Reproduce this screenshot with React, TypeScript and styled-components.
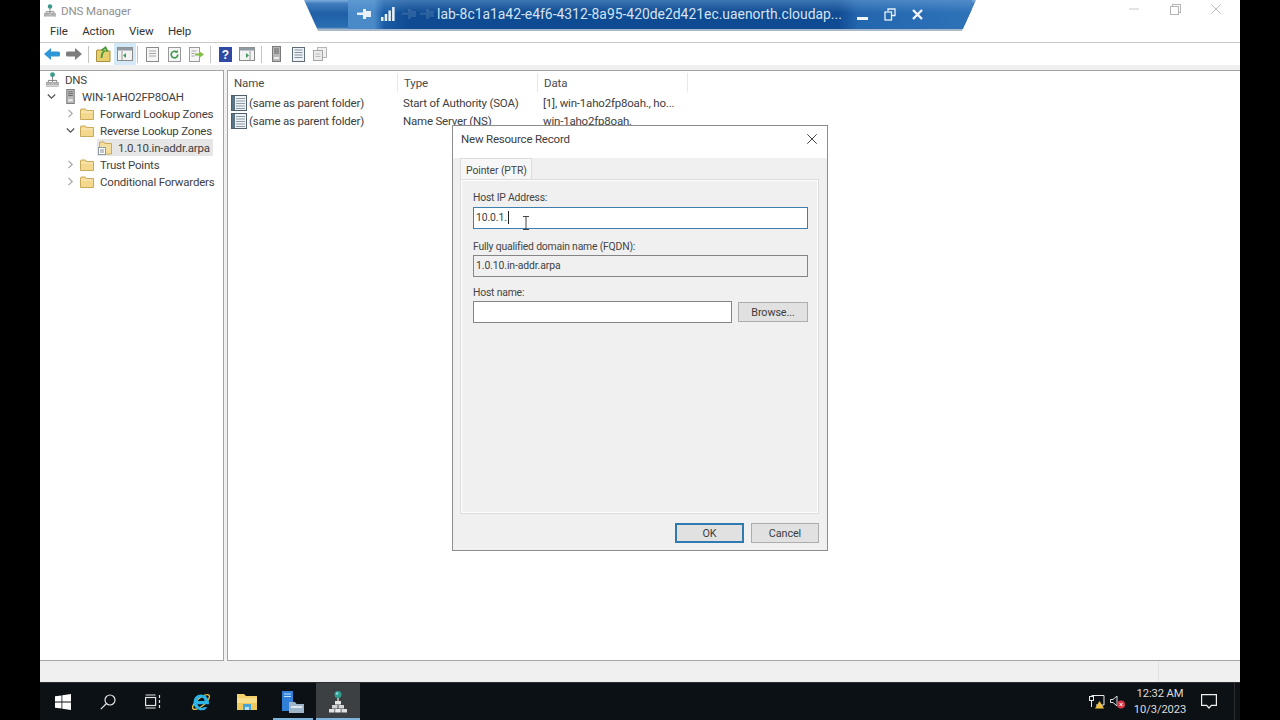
import React from "react";
import styled, { createGlobalStyle } from "styled-components";

const Global = createGlobalStyle`
  html, body { margin: 0; padding: 0; background: #000; overflow: hidden; }
  #root { width: 1280px; height: 720px; }
  * { box-sizing: border-box; }
`;

const FONT = `Roboto, "Noto Sans", "Liberation Sans", sans-serif`;

const Page = styled.div`
  width: 1280px; height: 720px; padding: 0 40px; background: #000;
  font-family: ${FONT}; font-size: 11px; color: #3c3c3c;
`;
const Screen = styled.div`
  position: relative; width: 1200px; height: 720px;
  display: flex; flex-direction: column; background: #fff; overflow: hidden;
`;
const TitleBar = styled.div`
  height: 22px; display: flex; align-items: center; padding: 0 0 1px 4px; background: #fff;
`;
const TitleText = styled.span`
  margin-left: 5px; color: #8f8f8f; font-size: 11.5px; letter-spacing: -0.1px;
`;
const WindowControls = styled.div`
  margin-left: auto; display: flex; align-items: center; gap: 30px; padding-right: 19px; margin-top: -3px;
`;
const MenuBar = styled.div`
  height: 21px; display: flex; align-items: center; gap: 14.5px; padding: 0 0 2px 10px;
  border-bottom: 1px solid #c9c9c9;
`;
const MenuItem = styled.span`
  font-size: 11.5px; letter-spacing: -0.1px; color: #333;
`;
const Toolbar = styled.div`
  height: 22px; display: flex; align-items: center; padding-left: 1px; background: #fff;
`;
const ToolButton = styled.div<{ $active?: boolean }>`
  width: 22px; height: 22px; display: flex; align-items: center; justify-content: center;
  background: ${(p) => (p.$active ? "#d3e9f8" : "transparent")};
`;
const ToolSep = styled.div<{ $tight?: boolean }>`
  width: 1px; height: 17px; background: #c4c4c4; margin: 0 3px 0 ${(p) => (p.$tight ? 1 : 3)}px;
`;
const ToolStrip = styled.div`
  height: 5px; background: #f0f0f0;
`;
const Panes = styled.div`
  flex: 1; display: flex; gap: 3px; background: #f0f0f0; min-height: 0;
`;
const TreePane = styled.div`
  width: 184px; background: #fff; border: 1px solid #a5a5a5; border-left: none;
`;
const TreeRow = styled.div<{ $indent: number }>`
  height: 17px; display: flex; align-items: center; padding-left: ${(p) => p.$indent}px;
  font-size: 11.5px; letter-spacing: -0.2px; color: #3f3f3f; white-space: nowrap;
`;
const Twist = styled.span`
  width: 12px; height: 12px; display: flex; align-items: center; justify-content: center; flex: none;
`;
const TreeIcon = styled.span<{ $offset?: number }>`
  width: 14px; height: 15px; margin-left: ${(p) => p.$offset ?? 0}px;
  display: flex; align-items: center; justify-content: center; flex: none;
`;
const TreeLabel = styled.span<{ $gap: number }>`
  margin-left: ${(p) => p.$gap}px;
`;
const ZoneSelection = styled.div`
  display: flex; align-items: center; height: 17px; width: 116px; padding-left: 1px; background: #e6e6e6;
`;
const ListPane = styled.div`
  flex: 1; background: #fff; border: 1px solid #a5a5a5; border-right: none;
`;
const HeaderRow = styled.div`
  height: 23px; display: flex; padding-top: 2px;
`;
const HeaderCell = styled.div<{ $w: number }>`
  width: ${(p) => p.$w}px; height: 19px; padding-left: 6px; display: flex; align-items: center;
  border-right: 1px solid #e8e8e8; font-size: 11.5px; letter-spacing: -0.1px; color: #4a4a4a;
`;
const ListRow = styled.div`
  height: 18px; display: flex; align-items: center; white-space: nowrap;
  font-size: 11.5px; letter-spacing: -0.2px; color: #404040;
`;
const NameCell = styled.div`
  width: 170px; padding-left: 3px; display: flex; align-items: center; gap: 2px;
`;
const Cell = styled.div<{ $w?: number }>`
  width: ${(p) => (p.$w ? `${p.$w}px` : "auto")}; padding-left: 5px;
`;
const StatusBar = styled.div`
  height: 21px; background: #f0f0f0; display: flex; justify-content: flex-end;
`;
const StatusGrip = styled.div`
  width: 82px; border-left: 1px solid #e2e2e2;
`;
const Taskbar = styled.div`
  height: 38px; background: #0c1116; display: flex; align-items: center; border-top: 1px solid #2a2e33;
`;
const TaskButton = styled.div<{ $active?: boolean; $running?: boolean; $w?: number; $offset?: number }>`
  position: relative; width: ${(p) => p.$w ?? 46}px; height: 37px; margin-left: ${(p) => p.$offset ?? 0}px;
  display: flex; align-items: center; justify-content: center;
  background: ${(p) => (p.$active ? "#3d4043" : "transparent")};
  &::after {
    content: ""; position: absolute; left: ${(p) => (p.$active ? 0 : 3)}px; right: ${(p) => (p.$active ? 0 : 3)}px; bottom: 0; height: 2px;
    background: ${(p) => (p.$running ? "#7fb5dc" : "transparent")};
  }
`;
const Tray = styled.div`
  margin-left: auto; display: flex; align-items: center; height: 100%; color: #e6e6e6;
`;
const TrayIcon = styled.div`
  width: 21px; display: flex; justify-content: center;
`;
const Clock = styled.div`
  width: 62px; margin-left: 1px; text-align: center; line-height: 16px; font-size: 11.2px; letter-spacing: -0.1px; color: #dcdcdc;
`;
const Notify = styled.div`
  width: 44px; display: flex; justify-content: center; padding-right: 8px; margin-right: 5px;
  border-right: 1px solid #2c2c2c; height: 100%; align-items: center;
`;

/* Remote desktop connection bar */
const ConnBar = styled.div`
  position: absolute; left: 264px; top: 0; width: 672px; height: 31px;
  clip-path: polygon(0 0, 100% 0, 97.9% 100%, 2.1% 100%);
  background: linear-gradient(180deg, #7eaddb 0, #3e7cbc 12%, #1f5fa6 45%, #2a6fb4 88%, #a9b9c9 95%);
  display: flex; align-items: flex-start; color: #e4edf7;
`;
const ConnInner = styled.div`
  height: 29px; width: 624px; margin-left: 44px; padding: 0 0 1px 4px;
  background:
    linear-gradient(180deg, rgba(120, 170, 220, 0.45) 0, rgba(120, 170, 220, 0) 45%),
    linear-gradient(90deg, #4a8ac8 0, #4a8ac8 26px, #1a5da6 36px, #0f4b92 60px, #0f4b92 490px, #2366ae 510px, #2e72b8 100%);
  display: flex; align-items: center;
`;
const PinBox = styled.div`
  width: 24px; display: flex; justify-content: center;
`;
const GhostBox = styled.div`
  width: 18px; display: flex; justify-content: center; opacity: 0.13;
`;
const ConnText = styled.span`
  width: 406px; margin-left: 1px; font-size: 13.9px; color: #d5e3f2; white-space: nowrap;
`;
const ConnControls = styled.div`
  display: flex; align-items: center; gap: 16px; margin-left: 14px;
`;

/* Dialog */
const Dialog = styled.div`
  position: absolute; left: 412px; top: 125px; width: 376px; height: 426px;
  background: #f0f0f0; border: 1px solid #8d8d8d; display: flex; flex-direction: column;
`;
const DialogTitle = styled.div`
  height: 27px; background: #fff; display: flex; align-items: center; justify-content: space-between;
  padding: 0 10px 2px 8px; font-size: 11.5px; letter-spacing: -0.2px; color: #404040; flex: none;
`;
const TabStrip = styled.div`
  height: 27px; background: linear-gradient(#fff 0, #fff 5px, #f0f0f0 5px); padding: 5px 0 0 7px; display: flex; flex: none;
`;
const Tab = styled.div`
  width: 72px; height: 23px; background: #f7f7f7; border: 1px solid #dcdcdc; border-bottom: none;
  display: flex; align-items: center; padding-left: 5px; font-size: 10.4px; letter-spacing: -0.1px; color: #444;
`;
const TabPanel = styled.div`
  height: 335px; margin: -1px 8px 0 7px; background: #f0f0f0; border: 1px solid #dcdcdc;
  box-shadow: inset 0 0 0 1px #fff; padding: 10px 12px 0 12px;
`;
const FieldLabel = styled.div<{ $before?: number; $after?: number }>`
  height: 14px; line-height: 14px; padding-top: 1px; font-size: 10.4px; letter-spacing: -0.2px; color: #454545;
  margin-top: ${(p) => p.$before ?? 0}px; margin-bottom: ${(p) => p.$after ?? 2}px;
`;
const Field = styled.div<{ $focus?: boolean; $off?: boolean }>`
  height: 22px; width: 335px; border: 1px solid ${(p) => (p.$focus ? "#3f7fae" : "#858585")};
  background: ${(p) => (p.$off ? "#f0f0f0" : "#fff")};
  display: flex; align-items: center; padding: 0 0 2px 2px; font-size: 10.4px; letter-spacing: -0.1px; color: #404040;
  margin-bottom: 10px;
`;
const Caret = styled.span`
  display: inline-block; width: 1px; height: 13px; background: #222; margin-left: 1px;
`;
const HostRow = styled.div`
  display: flex; align-items: center; width: 335px; justify-content: space-between;
`;
const HostInput = styled.div`
  width: 259px; height: 22px; background: #fff; border: 1px solid #858585;
`;
const Button = styled.div<{ $primary?: boolean; $w: number }>`
  width: ${(p) => p.$w}px; height: 20px; display: flex; align-items: center; justify-content: center;
  background: #e1e1e1; border: ${(p) => (p.$primary ? "2px solid #2f7bb0" : "1px solid #adadad")};
  font-size: 10.8px; letter-spacing: -0.1px; color: #3c3c3c;
`;
const DialogFooter = styled.div`
  display: flex; justify-content: flex-end; gap: 7px; padding: 9px 8px 0 0;
`;
const IBeam = styled.svg`
  position: absolute; left: 482px; top: 216px;
`;

/* ---------- icons ---------- */
const DnsIcon = ({ s = 14 }: { s?: number }) => (
  <svg width={s} height={s * 1.15} viewBox="0 0 14 16">
    <circle cx="7" cy="2.800" r="2.600" fill="#3a9a8c" />
    <path d="M7 5v3M2.500 11V9h9v2M7 8v3" stroke="#777" fill="none" />
    <rect x="0.5" y="11" width="4" height="2.200" fill="#b5b5b5" stroke="#888" strokeWidth=".5" />
    <rect x="5" y="11" width="4" height="2.200" fill="#c5c5c5" stroke="#888" strokeWidth=".5" />
    <rect x="9.500" y="11" width="4" height="2.200" fill="#b5b5b5" stroke="#888" strokeWidth=".5" />
    <rect x="0.5" y="13.400" width="13" height="2.200" fill="#d5d5d5" stroke="#999" strokeWidth=".5" />
  </svg>
);
const TaskDns = () => (
  <svg width="18" height="22" viewBox="0 0 18 22">
    <circle cx="9" cy="3.500" r="3.500" fill="#2f9f8f" />
    <circle cx="8" cy="2.500" r="1.200" fill="#8fd6e8" />
    <path d="M9 7v3" stroke="#cfcfcf" strokeWidth="1.500" />
    <rect x="6" y="10" width="6" height="3.500" fill="#e6e6e6" />
    <rect x="3" y="14" width="5.500" height="3.500" fill="#d5d5d5" />
    <rect x="9.500" y="14" width="5.500" height="3.500" fill="#d5d5d5" />
    <rect x="0" y="18" width="5.500" height="3.500" fill="#e0e0e0" />
    <rect x="6.200" y="18" width="5.500" height="3.500" fill="#ececec" />
    <rect x="12.500" y="18" width="5.500" height="3.500" fill="#e0e0e0" />
  </svg>
);
const ServerIcon = ({ h = 15 }: { h?: number }) => (
  <svg width="9" height={h} viewBox="0 0 9 16">
    <rect x="0.5" y="0.5" width="8" height="15" fill="#b9b9b9" stroke="#7a7a7a" />
    <path d="M2 3h5M2 5h5M2 7h5" stroke="#666" />
    <rect x="2" y="11" width="5" height="2" fill="#eee" />
  </svg>
);
const Folder = () => (
  <svg width="14" height="13" viewBox="0 0 14 13">
    <path d="M.5 2.500v10h13v-9H6.500l-1-1.500H1z" fill="#f3d88e" stroke="#c9a95a" />
    <path d="M1 5h12" stroke="#fbeec4" />
  </svg>
);
const ZoneIcon = () => (
  <svg width="14" height="15" viewBox="0 0 14 15">
    <path d="M1.500 3v11h12V3.500H7L6 2H2z" fill="#f3dea0" stroke="#c9a95a" />
    <rect x=".5" y="7.500" width="7" height="7" fill="#fff" stroke="#8c9aa5" />
    <path d="M2 10h4M2 12h4" stroke="#7f8c96" />
  </svg>
);
const ChevronRight = () => (
  <svg width="7" height="9" viewBox="0 0 7 9"><path d="M1.500 .8l3.700 3.700-3.700 3.700" stroke="#a6a6a6" strokeWidth="1.200" fill="none" /></svg>
);
const ChevronDown = () => (
  <svg width="9" height="7" viewBox="0 0 9 7"><path d="M.8 1.500l3.700 3.700 3.700-3.700" stroke="#555" strokeWidth="1.300" fill="none" /></svg>
);
const RecordIcon = () => (
  <svg width="16" height="16" viewBox="0 0 16 16">
    <rect x=".5" y=".5" width="15" height="15" fill="#eef2f5" stroke="#4c5f6b" />
    <rect x="1" y="1" width="3" height="14" fill="#5b7585" />
    <path d="M5 3.500h9M5 6h9M5 8.500h9M5 11h9M5 13.500h9" stroke="#8d9ca6" />
  </svg>
);
const BackArrow = () => (
  <svg width="16" height="14" viewBox="0 0 16 14"><path d="M0 7l7-6v3.500h7.500q1.500 0 1.500 1.500v2q0 1.500-1.500 1.500H7V13z" fill="#2f97d6" /></svg>
);
const ForwardArrow = () => (
  <svg width="16" height="14" viewBox="0 0 16 14"><path d="M16 7L9 1v3.500H1.500Q0 4.500 0 6v2q0 1.500 1.500 1.500H9V13z" fill="#7d7d7d" /></svg>
);
const UpIcon = () => (
  <svg width="15" height="16" viewBox="0 0 15 16">
    <path d="M.5 5v10.500h13.500V5H7L6 4H1z" fill="#e8cf6e" stroke="#a8913c" />
    <path d="M5.500 12c0-4 1-6 3.500-7.500M5.500 4.500L9.500 1.500l2 4" stroke="#4f9a3a" strokeWidth="2" fill="none" />
  </svg>
);
const PaneIcon = ({ flip }: { flip?: boolean }) => (
  <svg width="16" height="14" viewBox="0 0 16 14">
    <rect x=".5" y=".5" width="15" height="13" fill="#f3f3f3" stroke="#8b8b8b" />
    <rect x=".5" y=".5" width="15" height="3" fill="#8f9aa3" />
    <path d={flip ? "M7 6l3 2.500L7 11z" : "M9 6L6 8.500 9 11z"} fill="#3e9a5d" />
    <path d={flip ? "M11 4v9" : "M5 4v9"} stroke="#9a9a9a" />
  </svg>
);
const DocIcon = () => (
  <svg width="13" height="15" viewBox="0 0 13 15">
    <rect x=".5" y=".5" width="12" height="14" fill="#f5f5f5" stroke="#8a8a8a" />
    <path d="M3 4h7M3 6.500h7M3 9h7" stroke="#a5a5a5" />
  </svg>
);
const RefreshIcon = () => (
  <svg width="13" height="15" viewBox="0 0 13 15">
    <rect x=".5" y=".5" width="12" height="14" fill="#f5f5f5" stroke="#9a9a9a" />
    <path d="M9.800 7.500a3.300 3.300 0 1 1-1-2.300" stroke="#3f9a4f" strokeWidth="1.600" fill="none" />
    <path d="M9.800 2.800v3h-3z" fill="#3f9a4f" />
  </svg>
);
const ExportIcon = () => (
  <svg width="15" height="15" viewBox="0 0 15 15">
    <rect x=".5" y=".5" width="10" height="14" fill="#f5f5f5" stroke="#9a9a9a" />
    <path d="M2.500 4h5M2.500 6.500h3M2.500 9h3" stroke="#a5a5a5" />
    <path d="M6 6.500h4V4l5 3.500L10 11V8.500H6z" fill="#7fbf3f" />
  </svg>
);
const HelpIcon = () => (
  <svg width="13" height="15" viewBox="0 0 13 15">
    <rect width="13" height="15" fill="#2f4aa5" />
    <text x="6.500" y="12" textAnchor="middle" fontSize="12" fontWeight="700" fill="#fff" fontFamily="Liberation Sans">?</text>
  </svg>
);
const ListDocIcon = () => (
  <svg width="13" height="15" viewBox="0 0 13 15">
    <rect x=".5" y=".5" width="12" height="14" fill="#eef2f4" stroke="#5d6d78" />
    <path d="M2.500 3h8M2.500 5.500h8M2.500 8h8M2.500 10.500h8" stroke="#84939d" />
  </svg>
);
const CopyDocIcon = () => (
  <svg width="14" height="14" viewBox="0 0 14 14">
    <rect x="4.500" y=".5" width="9" height="10" fill="#f0f0f0" stroke="#b5b5b5" />
    <rect x=".5" y="3.500" width="9" height="10" fill="#ececec" stroke="#a5a5a5" />
    <path d="M2.500 7h5M2.500 9.500h5" stroke="#bbb" />
  </svg>
);
const Minimize = () => (
  <svg width="11" height="3" viewBox="0 0 11 3"><path d="M0 1h10" stroke="#c8c8c8" /></svg>
);
const Restore = () => (
  <svg width="11" height="11" viewBox="0 0 11 11" fill="#fff" stroke="#b5b5b5">
    <rect x="2.500" y=".5" width="8" height="8" /><rect x=".5" y="2.500" width="8" height="8" />
  </svg>
);
const CloseX = ({ c = "#bdbdbd", s = 10 }: { c?: string; s?: number }) => (
  <svg width={s} height={s} viewBox="0 0 10 10"><path d="M.3.300l9.400 9.400M9.700.300L.3 9.700" stroke={c} strokeWidth={10 / s} /></svg>
);
const Pin = () => (
  <svg width="14" height="12" viewBox="0 0 14 12" fill="#e8f0f8">
    <rect x="0" y="4.500" width="7" height="2.500" /><rect x="6" y="1" width="3" height="10" /><rect x="9" y="3" width="5" height="6" />
  </svg>
);
const Signal = () => (
  <svg width="14" height="14" viewBox="0 0 14 14" fill="#e8f0f8">
    <rect x="0" y="10" width="2.500" height="4" /><rect x="3.700" y="7" width="2.500" height="7" /><rect x="7.400" y="3.500" width="2.500" height="10.500" /><rect x="11.100" y="0" width="2.500" height="14" />
  </svg>
);
const ConnMin = () => (
  <svg width="11" height="12" viewBox="0 0 11 12"><rect x="0" y="9" width="11" height="3" fill="#f0f5fa" /></svg>
);
const ConnRestore = () => (
  <svg width="12" height="13" viewBox="0 0 12 13" fill="none" stroke="#e8f0f8" strokeWidth="1.300">
    <path d="M4 3V1h7v6.500H8" /><rect x="1" y="4" width="6.500" height="8" />
  </svg>
);
const ConnClose = () => (
  <svg width="11" height="11" viewBox="0 0 11 11"><path d="M1 1l9 9M10 1l-9 9" stroke="#f3f7fb" strokeWidth="2.400" /></svg>
);
const WinLogo = () => (
  <svg width="16" height="16" viewBox="0 0 16 16" fill="#fff">
    <path d="M0 2.300l6.500-.9v6.200H0zM7.300 1.300L16 0v7.600H7.300zM0 8.400h6.500v6.200L0 13.700zM7.300 8.400H16V16l-8.700-1.200z" />
  </svg>
);
const SearchIcon = () => (
  <svg width="16" height="16" viewBox="0 0 16 16" fill="none" stroke="#e4e4e4" strokeWidth="1.200">
    <circle cx="10" cy="6" r="5" /><path d="M6.500 9.500L.8 15.200" />
  </svg>
);
const TaskView = () => (
  <svg width="16" height="15" viewBox="0 0 16 15" fill="none" stroke="#e4e4e4" strokeWidth="1.200">
    <rect x=".6" y="3.500" width="10" height="8" /><path d="M.6 1h10M.6 14h10M14.500 1v3M14.500 6v3M14.500 11v3" />
  </svg>
);
const IeIcon = () => (
  <svg width="22" height="22" viewBox="0 0 22 22">
    <ellipse cx="11" cy="11" rx="10.500" ry="4" transform="rotate(-40 11 11)" fill="none" stroke="#e2c04a" strokeWidth="1.300" />
    <path d="M11 3.500a7.500 7.500 0 0 0-7.500 8 8 8 0 0 0 14 5l-3-.5a4.500 4.500 0 0 1-7-2.800H19c.5-5-3-9.700-8-9.700zM7.500 10a3.500 3.500 0 0 1 7 0z" fill="#2ab4e8" fillRule="evenodd" />
  </svg>
);
const ExplorerIcon = () => (
  <svg width="20" height="17" viewBox="0 0 20 17">
    <path d="M0 1h7l2 2h11v14H0z" fill="#f4cf6a" />
    <rect x="0" y="5" width="20" height="12" fill="#f8dd8a" />
    <path d="M0 10h20v7H0z" fill="#eec75d" />
    <path d="M6 11h8v6h-2v-3H8v3H6z" fill="#45a5d8" />
    <rect x="8" y="14" width="4" height="3" fill="#bde0f2" />
  </svg>
);
const ServerMgr = () => (
  <svg width="22" height="22" viewBox="0 0 22 22">
    <rect x="0" y="0" width="11" height="20" fill="#2f80d6" />
    <path d="M2 3h7M2 5.500h7" stroke="#bfe0ff" />
    <path d="M7 11h6l1.500 2H22v9H7z" fill="#9eb4c8" />
    <rect x="9" y="15" width="11" height="2" fill="#dde7f0" />
  </svg>
);
const BellBox = () => (
  <svg width="16" height="15" viewBox="0 0 16 15" fill="none" stroke="#eee" strokeWidth="1.200">
    <path d="M.6.600h14.800v10.800h-5L8 14l-2.400-2.600h-5z" />
  </svg>
);
const NetTray = () => (
  <svg width="16" height="14" viewBox="0 0 16 14">
    <path d="M2.500.5H15V10H7" fill="none" stroke="#e8e8e8" />
    <rect x=".5" y="1.500" width="4" height="4" fill="none" stroke="#e8e8e8" />
    <path d="M2.500 6v6" stroke="#e8e8e8" />
    <path d="M10.500 6l4.500 7.500H6z" fill="#f0c040" />
  </svg>
);
const SoundTray = () => (
  <svg width="16" height="14" viewBox="0 0 16 14">
    <path d="M.5 4.500h2.500L7 1v10L3 7.500H.5z" fill="none" stroke="#e0e0e0" />
    <circle cx="11" cy="9.500" r="4" fill="#d93a4a" />
    <path d="M9.500 8l3 3M12.500 8l-3 3" stroke="#fff" />
  </svg>
);

type Node = { label: string; indent: number; twist?: "right" | "down"; kind: "folder" | "server" | "dns" | "zone"; offset: number; gap: number };
const tree: Node[] = [
  { label: "DNS", indent: 5, kind: "dns", offset: 0, gap: 6 },
  { label: "WIN-1AHO2FP8OAH", indent: 5, twist: "down", kind: "server", offset: 6, gap: 5 },
  { label: "Forward Lookup Zones", indent: 24, twist: "right", kind: "folder", offset: 4, gap: 6 },
  { label: "Reverse Lookup Zones", indent: 24, twist: "down", kind: "folder", offset: 4, gap: 6 },
  { label: "1.0.10.in-addr.arpa", indent: 57, kind: "zone", offset: 0, gap: 6 },
  { label: "Trust Points", indent: 24, twist: "right", kind: "folder", offset: 4, gap: 6 },
  { label: "Conditional Forwarders", indent: 24, twist: "right", kind: "folder", offset: 4, gap: 6 },
];

const nodeIcon = (k: Node["kind"]) =>
  k === "folder" ? <Folder /> : k === "server" ? <ServerIcon /> : k === "dns" ? <DnsIcon s={13} /> : <ZoneIcon />;

export default function App() {
  return (
    <Page>
      <Global />
      <Screen>
        <TitleBar>
          <DnsIcon s={12} />
          <TitleText>DNS Manager</TitleText>
          <WindowControls>
            <Minimize />
            <Restore />
            <CloseX />
          </WindowControls>
        </TitleBar>
        <MenuBar>
          <MenuItem>File</MenuItem>
          <MenuItem>Action</MenuItem>
          <MenuItem>View</MenuItem>
          <MenuItem>Help</MenuItem>
        </MenuBar>
        <Toolbar>
          <ToolButton><BackArrow /></ToolButton>
          <ToolButton><ForwardArrow /></ToolButton>
          <ToolSep />
          <ToolButton><UpIcon /></ToolButton>
          <ToolButton $active><PaneIcon /></ToolButton>
          <ToolSep $tight />
          <ToolButton><DocIcon /></ToolButton>
          <ToolButton><RefreshIcon /></ToolButton>
          <ToolButton><ExportIcon /></ToolButton>
          <ToolSep />
          <ToolButton><HelpIcon /></ToolButton>
          <ToolButton><PaneIcon flip /></ToolButton>
          <ToolSep />
          <ToolButton><ServerIcon h={16} /></ToolButton>
          <ToolButton><ListDocIcon /></ToolButton>
          <ToolButton><CopyDocIcon /></ToolButton>
        </Toolbar>
        <ToolStrip />
        <Panes>
          <TreePane>
            {tree.map((n) => (
              <TreeRow key={n.label} $indent={n.indent}>
                {n.kind === "zone" ? (
                  <ZoneSelection>
                    <TreeIcon>{nodeIcon(n.kind)}</TreeIcon>
                    <TreeLabel $gap={6}>{n.label}</TreeLabel>
                  </ZoneSelection>
                ) : (
                  <>
                    {n.twist && (
                      <Twist>
                        {n.twist === "right" ? <ChevronRight /> : <ChevronDown />}
                      </Twist>
                    )}
                    <TreeIcon $offset={n.offset}>{nodeIcon(n.kind)}</TreeIcon>
                    <TreeLabel $gap={n.gap}>{n.label}</TreeLabel>
                  </>
                )}
              </TreeRow>
            ))}
          </TreePane>
          <ListPane>
            <HeaderRow>
              <HeaderCell $w={170}>Name</HeaderCell>
              <HeaderCell $w={140}>Type</HeaderCell>
              <HeaderCell $w={150}>Data</HeaderCell>
            </HeaderRow>
            <ListRow>
              <NameCell><RecordIcon />(same as parent folder)</NameCell>
              <Cell $w={140}>Start of Authority (SOA)</Cell>
              <Cell>[1], win-1aho2fp8oah., ho...</Cell>
            </ListRow>
            <ListRow>
              <NameCell><RecordIcon />(same as parent folder)</NameCell>
              <Cell $w={140}>Name Server (NS)</Cell>
              <Cell>win-1aho2fp8oah.</Cell>
            </ListRow>
          </ListPane>
        </Panes>
        <StatusBar><StatusGrip /></StatusBar>
        <Taskbar>
          <TaskButton $w={45}><WinLogo /></TaskButton>
          <TaskButton $w={45}><SearchIcon /></TaskButton>
          <TaskButton $w={45}><TaskView /></TaskButton>
          <TaskButton $offset={3}><IeIcon /></TaskButton>
          <TaskButton><ExplorerIcon /></TaskButton>
          <TaskButton $running><ServerMgr /></TaskButton>
          <TaskButton $active $running $w={44}><TaskDns /></TaskButton>
          <Tray>
            <TrayIcon><NetTray /></TrayIcon>
            <TrayIcon><SoundTray /></TrayIcon>
            <Clock>12:32 AM<br />10/3/2023</Clock>
            <Notify><BellBox /></Notify>
          </Tray>
        </Taskbar>

        <ConnBar>
          <ConnInner>
            <PinBox><Pin /></PinBox>
            <PinBox><Signal /></PinBox>
            <GhostBox><Pin /></GhostBox>
            <GhostBox><Pin /></GhostBox>
            <ConnText>lab-8c1a1a42-e4f6-4312-8a95-420de2d421ec.uaenorth.cloudap...</ConnText>
            <ConnControls>
              <ConnMin />
              <ConnRestore />
              <ConnClose />
            </ConnControls>
          </ConnInner>
        </ConnBar>

        <Dialog>
          <DialogTitle>
            New Resource Record
            <CloseX c="#444" s={10} />
          </DialogTitle>
          <TabStrip><Tab>Pointer (PTR)</Tab></TabStrip>
          <TabPanel>
            <FieldLabel $after={3}>Host IP Address:</FieldLabel>
            <Field $focus>10.0.1.<Caret /></Field>
            <FieldLabel>Fully qualified domain name (FQDN):</FieldLabel>
            <Field $off>1.0.10.in-addr.arpa</Field>
            <FieldLabel $before={-2}>Host name:</FieldLabel>
            <HostRow>
              <HostInput />
              <Button $w={70}>Browse...</Button>
            </HostRow>
          </TabPanel>
          <DialogFooter>
            <Button $primary $w={69}>OK</Button>
            <Button $w={68}>Cancel</Button>
          </DialogFooter>
        </Dialog>
        <IBeam width="8" height="14" viewBox="0 0 8 14">
          <path d="M1 .5h6M1 13.500h6M4 .5v13" stroke="#444" fill="none" />
        </IBeam>
      </Screen>
    </Page>
  );
}
